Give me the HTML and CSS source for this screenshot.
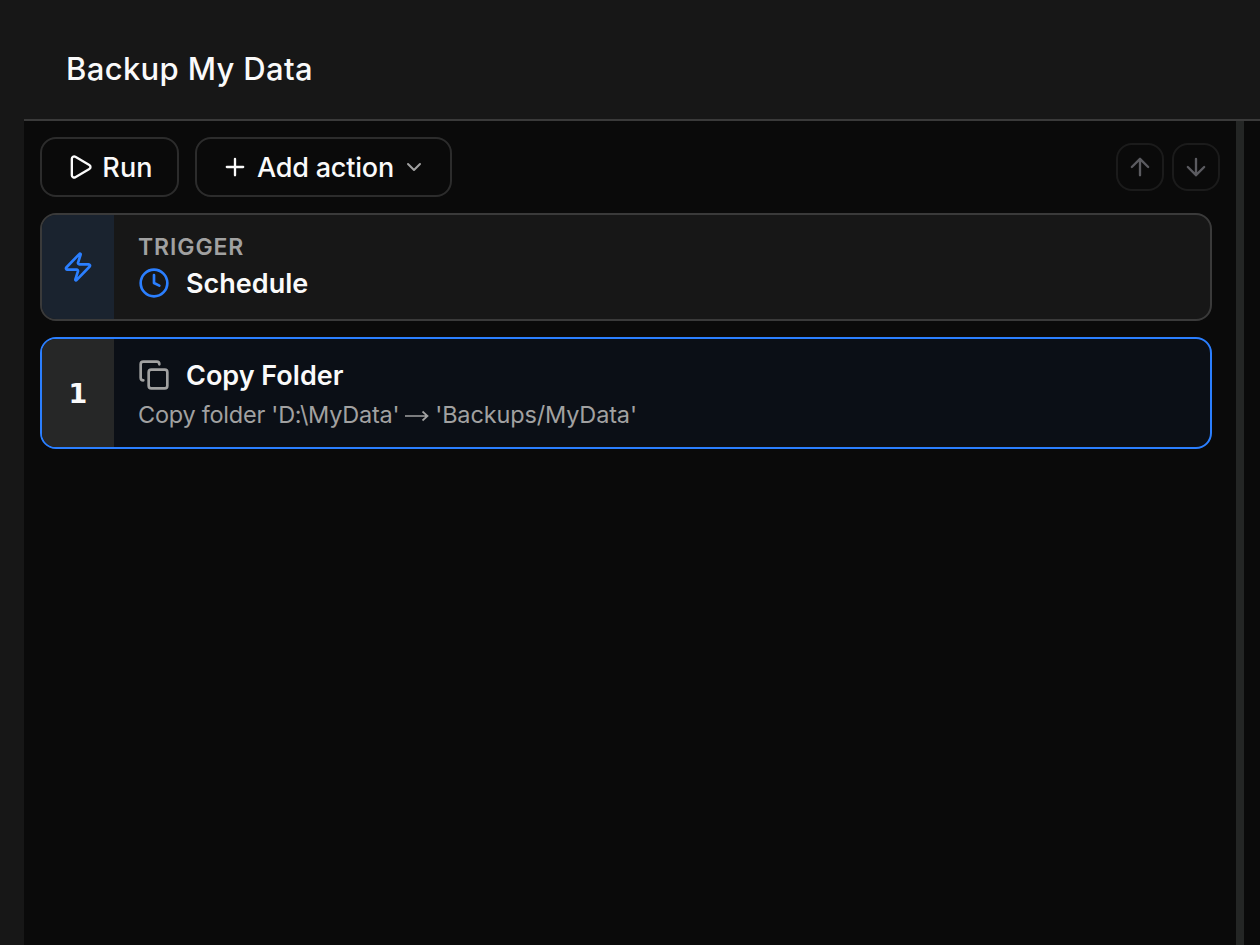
FILE: index.html
```html
<!DOCTYPE html>
<html lang="en">
<head>
    <meta charset="UTF-8">
    <meta name="viewport" content="width=device-width, initial-scale=1.0">
    <title>Backup My Data</title>
    <link rel="stylesheet" href="styles.css">
</head>
<body>
    <main>
        <header>
            <h1>Backup My Data</h1>
        </header>
        <div class="workspace">
            <section class="editor">
                <div class="toolbar">
                    <button class="btn" type="button">
                        <svg class="icon" viewBox="0 0 24 24"><path d="M5 5a2 2 0 0 1 3.008-1.728l11.997 6.998a2 2 0 0 1 .003 3.458l-12 7A2 2 0 0 1 5 19z"/></svg>
                        <span class="run-label">Run</span>
                    </button>
                    <button class="btn" type="button">
                        <svg class="icon" viewBox="0 0 24 24"><path d="M5 12h14M12 5v14"/></svg>
                        <span class="add-label">Add action</span>
                        <svg class="icon chevron" viewBox="0 0 24 24"><path d="m6 9 6 6 6-6"/></svg>
                    </button>
                    <div class="move">
                        <button class="btn-move" type="button" aria-label="Move up" disabled>
                            <svg class="icon" viewBox="0 0 24 24"><path d="m5 12 7-7 7 7M12 19V5"/></svg>
                        </button>
                        <button class="btn-move" type="button" aria-label="Move down" disabled>
                            <svg class="icon" viewBox="0 0 24 24"><path d="M12 5v14M19 12l-7 7-7-7"/></svg>
                        </button>
                    </div>
                </div>
                <div class="card trigger">
                    <div class="card-side">
                        <svg class="icon" viewBox="0 0 24 24"><path d="M4 14a1 1 0 0 1-.78-1.63l9.9-10.2a.5.5 0 0 1 .86.46l-1.92 6.02A1 1 0 0 0 13 10h7a1 1 0 0 1 .78 1.63l-9.9 10.2a.5.5 0 0 1-.86-.46l1.92-6.02A1 1 0 0 0 11 14z"/></svg>
                    </div>
                    <div class="card-body">
                        <p class="card-label">TRIGGER</p>
                        <div class="card-title">
                            <svg class="icon" viewBox="0 0 24 24"><circle cx="12" cy="12" r="10"/><path d="M12 6v6l4 2"/></svg>
                            <h2>Schedule</h2>
                        </div>
                    </div>
                </div>
                <div class="card action">
                    <div class="card-side">1</div>
                    <div class="card-body">
                        <div class="card-title">
                            <svg class="icon" viewBox="0 0 24 24"><rect x="8" y="8" width="14" height="14" rx="2"/><path d="M4 16c-1.1 0-2-.9-2-2V4c0-1.1.9-2 2-2h10c1.1 0 2 .9 2 2"/></svg>
                            <h2>Copy Folder</h2>
                        </div>
                        <p class="card-text"><span class="from">Copy folder 'D:\MyData'</span><svg class="arrow" viewBox="0 0 24 12"><path d="M0 6h22M17.500 1.500 22.500 6l-5 4.500"/></svg><span class="to">'Backups/MyData'</span></p>
                    </div>
                </div>
            </section>
            <div class="divider"></div>
        </div>
    </main>
</body>
</html>
```
FILE: styles.css
```css
*{
    box-sizing: border-box;
}
body{
    margin: 0;
    height: 100vh;
    overflow: hidden;
    padding-left: 24px;
    background-color: #171717;
    color: #fafafa;
    font-family: Inter, 'Liberation Sans', sans-serif;
}
h1, h2, p{
    margin: 0;
    white-space: nowrap;
}
main{
    height: 100%;
    display: flex;
    flex-direction: column;
}
header{
    height: 121px;
    padding: 18px 42px 0;
    display: flex;
    align-items: center;
    border-bottom: 2px solid #3a3a3a;
}
h1{
    font-size: 31px;
    font-weight: 550;
    letter-spacing: 0.35px;
}
.icon{
    width: 28px;
    height: 28px;
    flex: none;
    fill: none;
    stroke: currentColor;
    stroke-width: 2;
    stroke-linecap: round;
    stroke-linejoin: round;
}
.workspace{
    flex: 1;
    display: flex;
    background-color: #0a0a0a;
}
.editor{
    width: 1212px;
    padding: 16px;
}
.divider{
    width: 8px;
    background-color: #242625;
}

/* toolbar */
.toolbar{
    height: 60px;
    display: flex;
    align-items: center;
    gap: 16px;
    margin-bottom: 16px;
}
.btn{
    height: 60px;
    padding: 0 24px;
    display: flex;
    align-items: center;
    gap: 8px;
    background: none;
    border: 2px solid #2c2c2c;
    border-radius: 16px;
    color: #fafafa;
    font: 500 27px Inter, sans-serif;
    white-space: nowrap;
}
.btn span{
    padding-top: 1px;
}
.run-label{
    width: 51px;
    letter-spacing: 0.1px;
}
.add-label{
    width: 137px;
    letter-spacing: -0.2px;
}
.chevron{
    width: 24px;
    height: 24px;
    color: #a1a1a1;
}
.move{
    margin-left: auto;
    display: flex;
    gap: 8px;
}
.btn-move{
    width: 48px;
    height: 48px;
    padding: 0;
    display: flex;
    align-items: center;
    justify-content: center;
    background: none;
    border: 2px solid #1b1b1b;
    border-radius: 16px;
    color: #5b5b60;
}

/* cards */
.card{
    width: 1172px;
    display: flex;
    overflow: hidden;
    border: 2px solid #3a3a3a;
    border-radius: 16px;
    background-color: #171717;
}
.card .icon{
    width: 32px;
    height: 32px;
}
.card-side{
    width: 72px;
    display: flex;
    align-items: center;
    justify-content: center;
}
.card-body{
    flex: 1;
    padding: 16px 24px;
}
.card-title{
    height: 40px;
    display: flex;
    align-items: center;
    gap: 16px;
}
h2{
    padding-top: 1px;
    font-size: 27px;
    font-weight: 600;
    letter-spacing: 0;
}
.trigger{
    height: 108px;
    margin-bottom: 16px;
}
.trigger .icon{
    color: #2b7fff;
}
.trigger .card-side{
    background-color: #1a232f;
}
.card-label{
    height: 32px;
    line-height: 33px;
    color: #a1a1a1;
    font-size: 23px;
    font-weight: 600;
    letter-spacing: 0.9px;
}
.action{
    height: 112px;
    border-color: #2b7fff;
    background-color: #0b0f16;
}
.action .card-side{
    padding-top: 1px;
    background-color: #262727;
    font: bold 27px 'DejaVu Sans', sans-serif;
}
.action .icon{
    color: #a1a1a1;
}
.card-text{
    height: 38px;
    display: flex;
    align-items: center;
    color: #a1a1a1;
    font-size: 23.5px;
}
.from{
    letter-spacing: -0.25px;
}
.to{
    letter-spacing: -0.15px;
}
.arrow{
    width: 24px;
    height: 12px;
    margin: 3px 6px 0;
    fill: none;
    stroke: currentColor;
    stroke-width: 1.7;
}
```
